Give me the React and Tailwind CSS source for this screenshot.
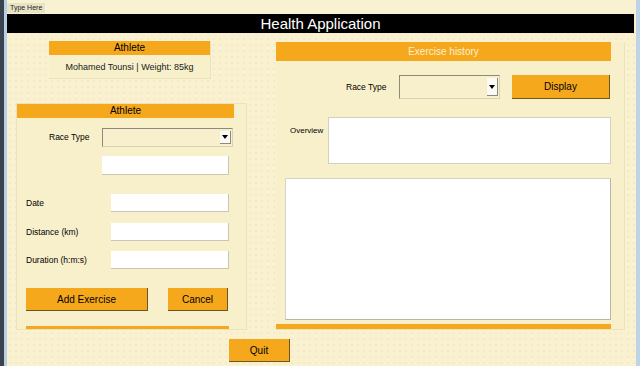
const font = { fontFamily: '"Liberation Sans", Arial, sans-serif' };

function Select({ className = "" }) {
  return (
    <div className={`flex items-stretch bg-[#f8f0cc] border-t border-l border-[#8e8a7a] border-r border-b border-r-[#d8d2b8] border-b-[#d8d2b8] ${className}`}>
      <div className="flex-1" />
      <div className="w-[11px] my-[2px] mr-[1px] bg-[#fbfaf4] border-r border-b border-[#8e8a7a] flex items-center justify-center">
        <div className="w-0 h-0 border-l-[3px] border-r-[3px] border-t-[4px] border-l-transparent border-r-transparent border-t-black" />
      </div>
    </div>
  );
}

function Field({ className = "" }) {
  return <div className={`bg-white border-b border-r border-[#c9c6b6] ${className}`} />;
}

function Btn({ children, className = "" }) {
  return (
    <div className={`flex items-center justify-center bg-[#f5a81c] border-r border-b border-[#6e5522] text-[10px] text-black ${className}`}>
      {children}
    </div>
  );
}

export default function App() {
  return (
    <div
      className="w-[640px] h-[366px] overflow-hidden flex bg-[#f8f0cc] text-black"
      style={font}
    >
      <div className="w-[4px] bg-[#3b4350]" />
      <div className="w-[3px] bg-[#b8d0e6]" />

      <div className="flex-1 flex flex-col bg-[#f9f1cf] bg-[radial-gradient(circle,#e4dab4_0.5px,transparent_0.8px)] bg-[length:6px_6px]">
        <div className="h-[14px] flex items-end bg-[#f8f1d2]">
          <div className="h-[10px] px-[3px] bg-[#e9e3c6] text-[7px] leading-[10px] text-[#222] mb-[1px]">
            Type Here
          </div>
        </div>
        <div className="h-[19px] mr-[2px] bg-black text-white text-[15px] leading-[19px] flex items-center justify-center">
          Health Application
        </div>

        <div className="flex">
          {/* left column */}
          <div className="w-[269px] flex flex-col">
            <div className="ml-[42px] mt-[8px] w-[162px] h-[38px] bg-[#f8f0cb] border-r border-b border-[#ece2bb]">
              <div className="h-[14px] bg-[#f5a81c] text-[10px] leading-[14px] text-center">Athlete</div>
              <div className="pt-[7px] text-[9px] leading-[11px] text-center text-[#1a1a1a]">
                Mohamed Tounsi | Weight: 85kg
              </div>
            </div>

            <div className="ml-[9px] mt-[24px] w-[231px] h-[227px] bg-[#f8f0cb] border border-[#ece2bb] flex flex-col">
              <div className="w-[217px] h-[14px] bg-[#f5a81c] text-[10px] leading-[14px] text-center">Athlete</div>

              <div className="mt-[10px] flex items-center h-[19px]">
                <div className="w-[85px] pl-[32px] text-[8.5px]">Race Type</div>
                <Select className="w-[131px] h-[19px]" />
              </div>
              <div className="mt-[9px] flex">
                <Field className="ml-[85px] w-[127px] h-[19px]" />
              </div>

              {[
                ["Date", "mt-[19px]"],
                ["Distance (km)", "mt-[11px]"],
                ["Duration (h:m:s)", "mt-[10px]"],
              ].map(([label, mt]) => (
                <div key={label} className={`${mt} flex items-center h-[18px]`}>
                  <div className="w-[94px] pl-[9px] text-[8.5px]">{label}</div>
                  <Field className="w-[118px] h-[18px]" />
                </div>
              ))}

              <div className="mt-[19px] flex pl-[9px]">
                <Btn className="w-[122px] h-[23px]">Add Exercise</Btn>
                <Btn className="ml-[20px] w-[60px] h-[23px]">Cancel</Btn>
              </div>
              <div className="mt-[15px] ml-[9px] w-[203px] h-[5px] bg-[#f5a81c]" />
            </div>
          </div>

          {/* right column */}
          <div className="mt-[9px] w-[349px] h-[288px] bg-[#f8f0cb] border-r border-b border-[#ece2bb] flex flex-col">
            <div className="w-[335px] h-[19px] bg-[#f5a81c] text-[10px] leading-[19px] text-center text-[#fcefd2]">
              Exercise history
            </div>
            <div className="mt-[14px] flex items-center h-[24px]">
              <div className="w-[123px] pl-[70px] text-[8.5px]">Race Type</div>
              <Select className="w-[101px] h-[24px]" />
              <Btn className="ml-[12px] w-[98px] h-[24px]">Display</Btn>
            </div>
            <div className="mt-[18px] flex">
              <div className="w-[52px] pl-[14px] pt-[8px] text-[8px]">Overview</div>
              <div className="w-[283px] h-[47px] bg-white border border-[#d4d0c0]" />
            </div>
            <div className="mt-[14px] ml-[9px] w-[326px] h-[143px] bg-white border border-[#d8d4c4] border-r-[#b9b5a5] border-b-[#b9b5a5]" />
            <div className="mt-[4px] w-[335px] h-[5px] bg-[#f5a81c]" />
          </div>
        </div>

        <div className="mt-[9px] ml-[222px]">
          <Btn className="w-[61px] h-[23px]">Quit</Btn>
        </div>
      </div>

      <div className="w-[4px] bg-[#bcd4e6]" />
    </div>
  );
}
